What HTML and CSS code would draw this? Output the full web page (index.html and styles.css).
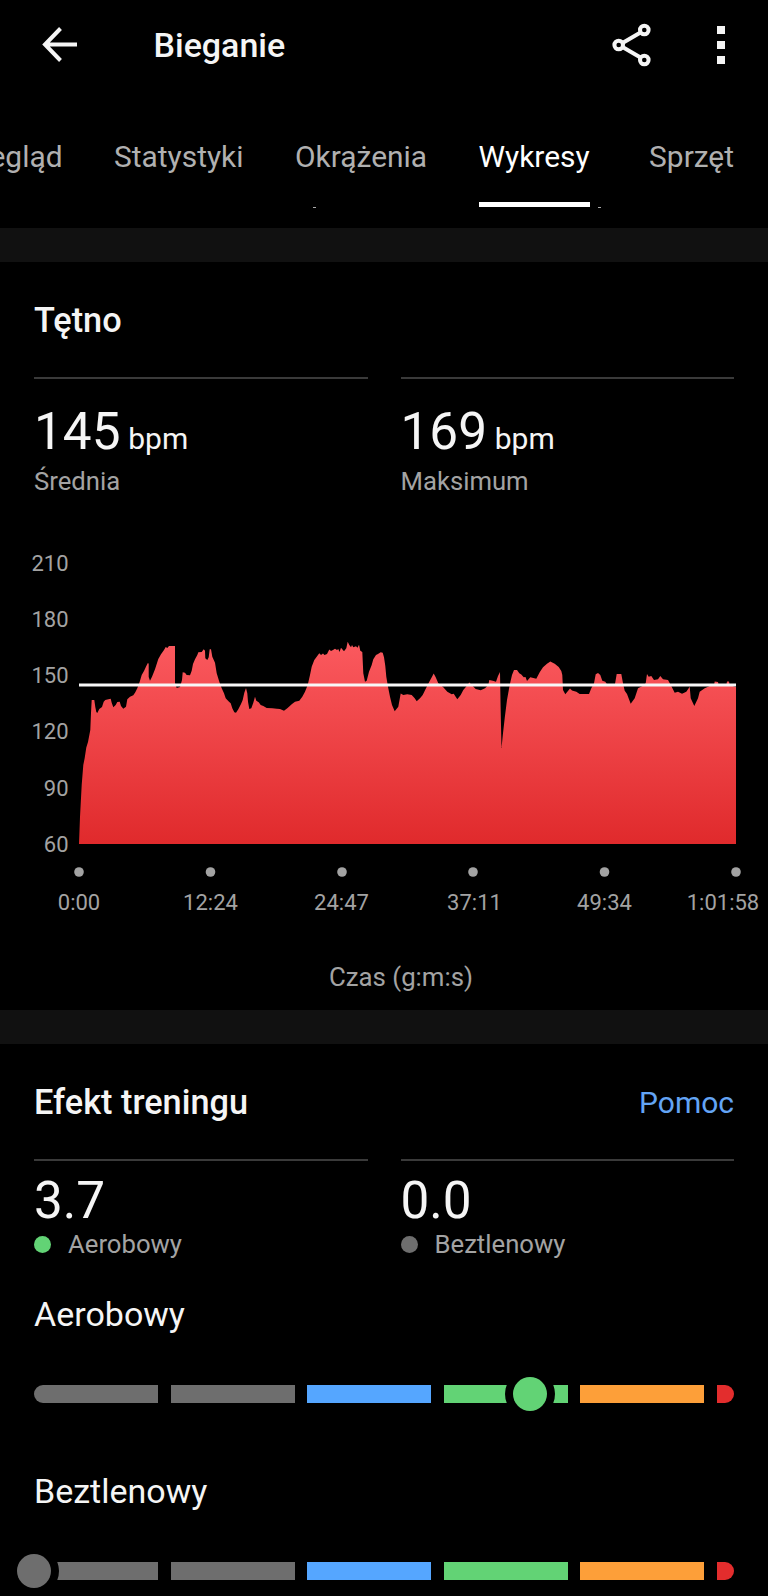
FILE: index.html
```html
<!DOCTYPE html>
<html lang="pl">
<head>
    <meta charset="UTF-8">
    <meta name="viewport" content="width=device-width, initial-scale=1.0">
    <title>Bieganie</title>
    <link rel="stylesheet" href="styles.css">
</head>
<body>
    <header class="topbar">
        <svg class="icon-back" width="36" height="36" viewBox="0 0 36 36">
            <path d="M18.5 1.5 L3 17.5 L18.5 33.5 M3 17.5 H35" />
        </svg>
        <h1 class="title">Bieganie</h1>
        <svg class="icon-share" width="40" height="44" viewBox="0 0 40 44">
            <path d="M10.5 20 L28.5 9.5 M10.5 24 L28.5 34.5" />
            <circle cx="6.7" cy="22" r="4.3" />
            <circle cx="32.3" cy="7" r="4.3" />
            <circle cx="32.3" cy="37" r="4.3" />
        </svg>
        <div class="icon-more"><span></span><span></span><span></span></div>
    </header>

    <nav class="tabs">
        <a class="tab">Przegląd</a>
        <a class="tab">Statystyki</a>
        <a class="tab">Okrążenia</a>
        <a class="tab active">Wykresy</a>
        <a class="tab">Sprzęt</a>
        <span class="speck speck-left"></span>
        <span class="speck speck-right"></span>
    </nav>

    <section class="card heart-rate">
        <div class="card-head">
            <h2>Tętno</h2>
        </div>
        <div class="stats">
            <div class="stat">
                <div class="value">145 <small>bpm</small></div>
                <div class="label">Średnia</div>
            </div>
            <div class="stat">
                <div class="value">169 <small>bpm</small></div>
                <div class="label">Maksimum</div>
            </div>
        </div>

        <svg class="chart" width="768" height="400" viewBox="0 0 768 400">
            <defs>
                <linearGradient id="hr" x1="0" y1="100" x2="0" y2="304" gradientUnits="userSpaceOnUse">
                    <stop offset="0" stop-color="#fb5a5f" />
                    <stop offset="1" stop-color="#e02a2c" />
                </linearGradient>
            </defs>
            <g class="axis-y">
                <text x="68.5" y="30.8">210</text>
                <text x="68.5" y="87">180</text>
                <text x="68.5" y="143">150</text>
                <text x="68.5" y="199.3">120</text>
                <text x="68.5" y="255.5">90</text>
                <text x="68.5" y="311.6">60</text>
            </g>
            <polygon fill="url(#hr)" points="79,304 80,277 81.7,245 83.3,225 84.7,218 86.3,207.5 88,202 90.3,190 91,173 91.7,160 94.3,160 95.3,167 96.3,172 97.3,173 99.3,169 102,167 103.7,161.7 105.3,160 107.3,159.5 110.7,158.7 111.7,162.7 113.3,167.3 115.7,165 117.3,162 119.7,161.7 121,166 123.3,168.7 126,166.7 127.3,159.3 130,156.7 133.3,155.3 135.3,152.3 137.3,148.3 139.7,141.7 141.7,135 144,131 146.3,126 148,122.7 148.7,124 148.7,137 150,140.7 152,136.7 155,129.3 158.3,119 161,114.3 164,110 165.7,107 167.3,108 169,106 175,106 175,143 176.7,148 180,147 182,140 182.7,132.3 185,132.7 186.7,135 190,135.3 191.7,130.7 193,124 195,119.3 197.3,115 198.3,112.3 201.7,112 203.7,109.3 205,110.7 205.3,118.3 207.3,120 208.7,117.3 209.7,109.3 211,109.3 212.3,116.7 215,122.7 216.7,133.3 219.3,141.7 221.7,148.3 224,153.3 225.7,158.3 227.3,160 229,161.7 230.7,163.3 232.3,168.3 234.3,172.3 236,172.7 238.3,169.3 241,164 242.7,160 244.3,152.7 246,148 247.3,153.3 248,161.7 249.3,169 251.3,168.3 253.3,162.7 255,156.7 256.3,160.7 258.7,162.3 260.7,165 263.3,166 266.7,168 272.3,168.3 276.7,168.7 280,169 284,170.7 287.3,168.3 289,166.7 291.7,164.3 295,161.7 299.3,160.7 302.3,156.7 305,151.7 307.7,145 310,135 311.7,126.7 314.3,120 316.7,116.7 319.3,113.3 321,115 323,113.5 324.5,115 327,114 329.3,109.5 331,111 333,110 335,108.7 337,110 338.3,109 339.5,112 341,107.7 344,111.3 346.3,108.3 347.7,101.7 349.3,105 351,107.3 352,105 353.3,107.3 356,106.3 357.5,107.7 359,104.7 360.3,110.7 362.3,112 363.3,133.3 365,141.7 366.7,140.7 369,131.7 371.7,125 373.3,119.3 376,115 378,114 380.7,112.2 382.7,112.7 384,117.3 385.3,126 386.3,136.7 388,146.7 390,156.7 392,165 394.7,171.3 398.3,166.7 400.7,153.5 403.3,155 407.3,154.3 411.7,155 414.7,158.3 416.7,161.3 420,158.3 422.7,155 426,148.3 429.3,141.7 432,136.7 433.7,133.5 435.7,137.3 438.3,143.3 443.3,147.3 447.3,151.7 451.7,154.3 453.7,153.7 457.3,159.3 460.7,155 463.3,150 467.3,145.3 469.3,142.5 472,145.3 475.7,149 480.7,150.3 485,148.3 488.3,145 489.3,140 492.7,140.7 496,141.7 498,136 500,132 500.6,166.7 501.5,208 503,193.3 504.7,178.3 507,160 509.7,145 512,135 514,130 517,130 519.3,133.3 521.3,134.5 523.7,137.3 525.5,137 527,141 530.3,137.3 536.3,138.7 539.7,132.3 543,127.3 547,123.7 550.3,121.5 554.7,123.7 558.7,127 561.3,131 562.3,135 563,150 565.3,154.3 570,148.5 572,150.5 576.3,151.7 579.7,154 589,154 591.3,148.3 594,143.3 595.7,134.3 598,133 600.3,135 602.3,140.7 605.3,141.7 608,145.7 614.7,145.7 616.7,134 621.3,134 623,143.3 624.7,150.7 627,154 630.7,163.7 634.7,158.3 638,148.3 643,145.7 645.7,143.3 647,134 648.7,136.7 651.3,136 654,140 658,139.3 660.3,136 663,139.3 668,140 671.3,146 674.7,152.7 678,151.7 682,153.7 686.3,151.7 689.7,146.7 690.7,158.3 694.3,166 698,158.3 699.7,151.7 704.7,148.3 709.7,146 714,145.5 714.7,141.5 718,142 718.7,145.3 726.3,145.3 727,141.5 729,141.5 729.7,145.3 736,147 736,304" />
            <line class="average" x1="79" y1="145" x2="736" y2="145" />
            <g class="ticks">
                <circle cx="79" cy="332" r="4.8" />
                <circle cx="210.5" cy="332" r="4.8" />
                <circle cx="342" cy="332" r="4.8" />
                <circle cx="473" cy="332" r="4.8" />
                <circle cx="604.5" cy="332" r="4.8" />
                <circle cx="736" cy="332" r="4.8" />
            </g>
            <g class="axis-x">
                <text x="79" y="369.5">0:00</text>
                <text x="210.5" y="369.5">12:24</text>
                <text x="341.5" y="369.5">24:47</text>
                <text x="474.5" y="369.5">37:11</text>
                <text x="604.5" y="369.5">49:34</text>
                <text x="723" y="369.5">1:01:58</text>
            </g>
        </svg>
        <p class="axis-title">Czas (g:m:s)</p>
    </section>

    <section class="card training">
        <div class="card-head">
            <h2>Efekt treningu</h2>
            <a class="help">Pomoc</a>
        </div>
        <div class="stats">
            <div class="stat">
                <div class="value">3.7</div>
                <div class="label"><i class="dot green"></i>Aerobowy</div>
            </div>
            <div class="stat">
                <div class="value">0.0</div>
                <div class="label"><i class="dot gray"></i>Beztlenowy</div>
            </div>
        </div>

        <h3>Aerobowy</h3>
        <div class="scale">
            <span class="gray"></span>
            <span class="gray"></span>
            <span class="blue"></span>
            <span class="green"></span>
            <span class="orange"></span>
            <span class="red"></span>
            <b class="knob green" style="left: 496.3px"></b>
        </div>

        <h3>Beztlenowy</h3>
        <div class="scale">
            <span class="gray"></span>
            <span class="gray"></span>
            <span class="blue"></span>
            <span class="green"></span>
            <span class="orange"></span>
            <span class="red"></span>
            <b class="knob gray" style="left: 0px"></b>
        </div>
    </section>
</body>
</html>
```
FILE: styles.css
```css
* {
    box-sizing: border-box;
}

body {
    margin: 0;
    width: 768px;
    height: 1596px;
    overflow: hidden;
    background-color: #000;
    color: #f5f5f5;
    font-family: Roboto, sans-serif;
}

h1, h2, h3, p {
    margin: 0;
}

/* Top bar */
.topbar {
    display: flex;
    align-items: center;
    height: 90px;
    padding: 0 43px 0 42px;
}

.title {
    flex: 1;
    margin-left: 75.5px;
    font-size: 34px;
    font-weight: 500;
    line-height: 40px;
}

.icon-back, .icon-share {
    fill: none;
    stroke: #f5f5f5;
    stroke-width: 4;
}

.icon-more {
    display: flex;
    flex-direction: column;
    gap: 6.5px;
    margin-left: 65px;
}

.icon-more span {
    width: 8.5px;
    height: 8.5px;
    background-color: #f5f5f5;
}

/* Tabs */
.tabs {
    position: relative;
    display: flex;
    justify-content: flex-end;
    gap: 51.5px;
    height: 137.5px;
    padding: 49px 34px 0 0;
    overflow: hidden;
}

.tab {
    flex: none;
    height: 68px;
    color: #b0b0b0;
    font-size: 29.9px;
    line-height: 36px;
}

.tab.active {
    margin-right: 8px;
    color: #fff;
    border-bottom: 5px solid #fff;
}

.speck {
    position: absolute;
    top: 117px;
    width: 3px;
    height: 1px;
    background-color: #aaa;
}

.speck-left {
    left: 313px;
}

.speck-right {
    left: 598px;
}

/* Cards */
.card {
    border-top: 34px solid #111;
}

.card-head {
    display: flex;
    justify-content: space-between;
    align-items: center;
    height: 115px;
    padding: 1px 34px 0;
}

h2 {
    font-size: 34.3px;
    font-weight: 500;
    line-height: 40px;
}

.help {
    padding-top: 1px;
    color: #63a4f5;
    font-size: 30px;
    line-height: 40px;
}

.stats {
    display: flex;
    gap: 33px;
    padding: 0 34px;
}

.stat {
    flex: 1;
    border-top: 2px solid #3a3a3a;
}

.value {
    font-size: 51.3px;
    line-height: 60px;
}

.value small {
    margin-left: -5px;
    font-size: 30px;
}

.label {
    display: flex;
    align-items: center;
    color: #a3a3a3;
    font-size: 25.7px;
    line-height: 32px;
}

.dot {
    width: 17px;
    height: 17px;
    margin-right: 17px;
    border-radius: 50%;
}

/* Heart rate */
.heart-rate {
    height: 782.5px;
}

.heart-rate .value {
    padding-top: 23px;
    height: 86px;
}

.heart-rate .stats {
    height: 163.5px;
}

.chart {
    display: block;
    fill: #a3a3a3;
    font-size: 22px;
}

.axis-y {
    text-anchor: end;
}

.axis-x {
    text-anchor: middle;
}

.average {
    stroke: #f8f8f8;
    stroke-width: 3.2;
}

.axis-title {
    padding: 20px 0 0 34px;
    color: #a3a3a3;
    font-size: 25.8px;
    line-height: 34px;
    text-align: center;
}

/* Training effect */
.training .value {
    padding-top: 10px;
}

.training .label {
    margin-top: -3px;
}

h3 {
    padding: 34px 34px 0;
    font-size: 34px;
    font-weight: 400;
    line-height: 40px;
}

.scale {
    position: relative;
    display: flex;
    justify-content: space-between;
    height: 17.5px;
    margin: 51px 34px 0;
}

.scale + h3 {
    padding-top: 68.5px;
}

.scale span {
    width: 124px;
}

.scale span:first-child {
    border-radius: 9px 0 0 9px;
}

.scale .red {
    width: 17px;
    border-radius: 0 9px 9px 0;
}

.knob {
    position: absolute;
    top: 50%;
    width: 34px;
    height: 34px;
    margin: -17px 0 0 -17px;
    border-radius: 50%;
    box-shadow: 0 0 0 8px #000;
}

.gray { background-color: #6e6e6e; }
.blue { background-color: #55a6ff; }
.green { background-color: #62d375; }
.orange { background-color: #fd9f39; }
.red { background-color: #e32d2d; }
```
